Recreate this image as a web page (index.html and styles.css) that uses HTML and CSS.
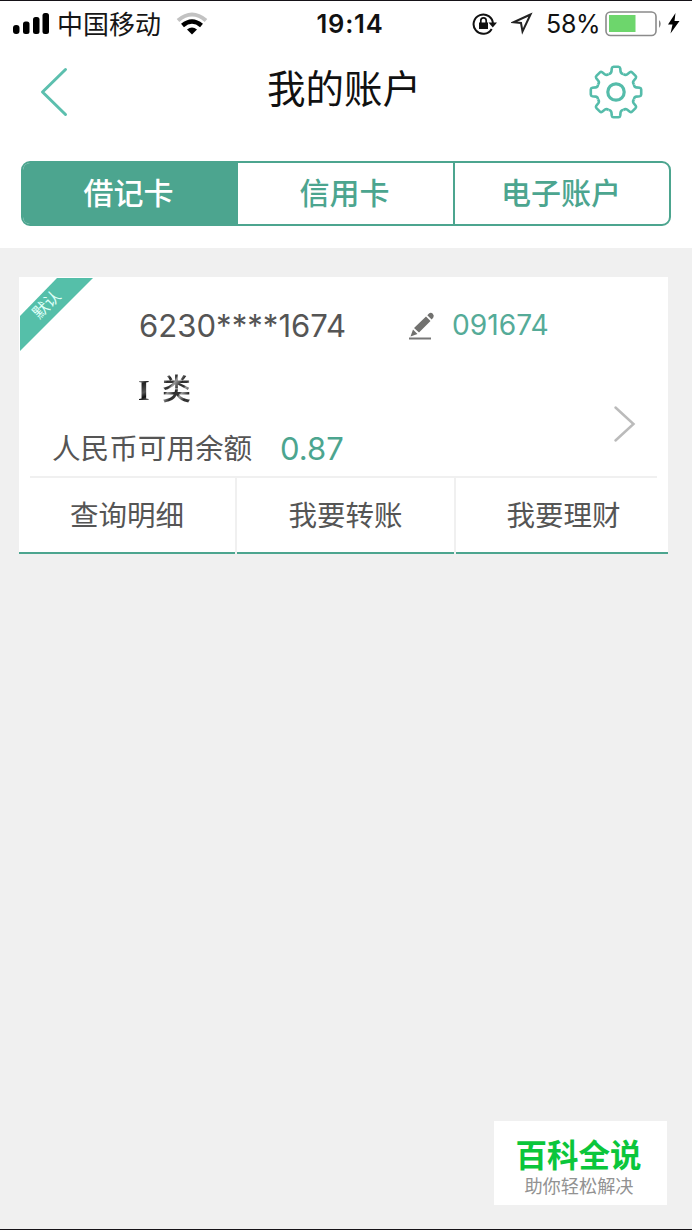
FILE: index.html
```html
<!DOCTYPE html>
<html lang="zh-CN">
<head>
<meta charset="utf-8">
<title>我的账户</title>
<link rel="stylesheet" href="styles.css">
</head>
<body>
<div class="screen">
  <header class="top">
    <div class="status">
      <div class="status-left">
        <svg class="signal" width="37" height="24" viewBox="0 0 37 24"><rect x="0" y="13" width="6.500" height="9" rx="3"/><rect x="10" y="9.500" width="6.500" height="12.500" rx="2.500"/><rect x="20" y="5" width="6.500" height="17" rx="2.500"/><rect x="29.500" y="1" width="6.500" height="21" rx="2.500"/></svg>
        <span class="carrier">中国移动</span>
        <svg class="wifi" width="32" height="24" viewBox="0 0 32 24" fill="none"><path d="M2 8.500Q16-3.500 30 8.500" stroke="#c2c2c2" stroke-width="4"/><path d="M6.500 13.500Q16 5.500 25.500 13.500" stroke="#000" stroke-width="4.500"/><path d="M11 17.500Q16 13.500 21 17.500L16 22.500Z" fill="#000"/></svg>
      </div>
      <span class="time">19:14</span>
      <div class="status-right">
        <svg class="lock" width="26" height="24" viewBox="0 0 26 24" fill="none" stroke="#111"><path d="M19.700 17A9.700 9.700 0 1 1 21 12" stroke-width="2"/><path d="M16.500 10.500H25L20.800 15.500Z" fill="#111" stroke="none"/><rect x="7" y="10.500" width="9" height="6.500" fill="#111" stroke="none"/><path d="M8.800 11V8.500a2.700 2.700 0 0 1 5.400 0V11" stroke-width="1.700"/></svg>
        <svg class="locate" width="23" height="23" viewBox="0 0 23 23"><path d="M19.500 2.500L2.500 10.300 10 11 11.500 19.500Z" fill="none" stroke="#222" stroke-width="2"/></svg>
        <span class="percent">58%</span>
        <svg class="battery" width="58" height="26" viewBox="0 0 58 26"><rect x="1" y="1" width="50" height="23.500" rx="4.500" fill="#fff" stroke="#8b8b8b" stroke-width="1.600"/><rect x="4" y="4" width="26.500" height="17" fill="#6dd66c"/><path d="M54 9q3.500 3.500 0 8Z" fill="#888"/></svg>
        <svg class="bolt" width="13" height="21" viewBox="0 0 13 21"><path d="M8.500 0L1 11.500H5.500L3.500 20.500 12.500 8H7.500Z"/></svg>
      </div>
    </div>
    <nav class="titlebar">
      <svg class="back" width="30" height="50" viewBox="0 0 30 50"><path d="M26.500 2.500L3.500 25 26.500 47.500"/></svg>
      <h1 class="title">我的账户</h1>
      <svg class="gear" width="56" height="56" viewBox="-28 -28 56 56"><defs><path id="tooth" d="M-7.460-18.010Q-5-18.200-4.600-20.200L-4.200-23.700Q-3.900-25.200-2.500-25.200H2.500Q3.900-25.200 4.200-23.700L4.600-20.200Q5-18.200 7.460-18.010"/></defs><use href="#tooth"/><use href="#tooth" transform="rotate(45)"/><use href="#tooth" transform="rotate(90)"/><use href="#tooth" transform="rotate(135)"/><use href="#tooth" transform="rotate(180)"/><use href="#tooth" transform="rotate(225)"/><use href="#tooth" transform="rotate(270)"/><use href="#tooth" transform="rotate(315)"/><circle r="8.200"/></svg>
    </nav>
    <div class="tabs"><div class="tab active">借记卡</div><div class="tab">信用卡</div><div class="tab">电子账户</div></div>
  </header>
  <main class="content">
    <section class="card">
      <svg class="ribbon" width="74" height="74" viewBox="0 0 74 74"><path d="M1 38L38 0H74L1 73Z" fill="#55bfa9"/><text class="ribbon-text" x="28" y="32" text-anchor="middle" transform="rotate(-45 28 27)">默认</text></svg>
      <div class="summary">
        <div class="details">
          <div class="number-row"><span class="number">6230****1674</span>
            <svg class="pencil" width="28" height="30" viewBox="0 0 28 30"><path d="M6 17L18 5.500 22.500 10 11 21.500Z M19.300 4.200L21 2.500Q23 1 24.800 2.800T25.200 6.800L23.600 8.600Z M5 18.500L9.500 23 2.500 25.500Z" fill="#71716f"/><path d="M1 27.500H23" stroke="#777" stroke-width="2"/></svg>
            <span class="alias">091674</span></div>
          <div class="kind"><span class="kind-level">I</span><span class="kind-name">类</span></div>
          <div class="balance-row"><span class="balance-label">人民币可用余额</span><span class="balance">0.87</span></div>
        </div>
        <svg class="chevron" width="24" height="38" viewBox="0 0 24 38"><path d="M2.500 2.500L20.500 19 2.500 35.500"/></svg>
      </div>
      <div class="actions"><div class="action">查询明细</div><div class="action">我要转账</div><div class="action">我要理财</div></div>
    </section>
  </main>
  <aside class="stamp"><div class="stamp-name">百科全说</div><div class="stamp-line">助你轻松解决</div></aside>
</div>
</body>
</html>
```
FILE: styles.css
```css
* { box-sizing: border-box; }
body { margin: 0; font-family: Inter, "Noto Sans CJK SC", sans-serif; background: #f0f0f0; }
svg { display: block; flex: none; }
.screen { position: relative; width: 692px; height: 1230px; background: #f0f0f0; border-top: 1px solid #151217; border-bottom: 1px solid #151217; overflow: hidden; }
.top { height: 247px; background: #fff; }
.status { height: 45px; display: grid; grid-template-columns: 250px 200px 1fr; align-items: center; }
.status-left, .status-right { display: flex; align-items: center; height: 45px; }
.status-left { padding-left: 13px; }
.carrier { margin-left: 7px; padding-bottom: 2px; font-size: 26px; color: #161616; white-space: nowrap; }
.wifi { margin-left: 15px; }
.time { text-align: center; font-size: 25.500px; font-weight: 600; color: #111; letter-spacing: .8px; }
.status-right { padding-left: 22px; }
.locate { margin-left: 13px; }
.percent { margin-left: 12px; font-size: 25px; color: #111; width: 55px; letter-spacing: -.3px; }
.battery { margin-left: 4px; }
.bolt { margin-left: 4px; }
.titlebar { height: 92px; display: grid; grid-template-columns: 250px 1fr 250px; align-items: center; }
.back { margin-left: 39px; fill: none; stroke: #5cbfae; stroke-width: 3; stroke-linecap: round; stroke-linejoin: round; }
.title { margin: 0 4px 6px 0; text-align: center; font-size: 38.500px; font-weight: 400; color: #111; line-height: 50px; }
.gear { margin-left: 146px; fill: none; stroke: #55bcaa; stroke-width: 2.600; }
.gear circle { stroke-width: 3.200; }
.tabs { margin: 23px 21px 0; width: 650px; height: 65px; display: grid; grid-template-columns: 213px 217px 1fr; border: 2px solid #4ca58f; border-radius: 9px; overflow: hidden; }
.tab { display: flex; align-items: center; justify-content: center; padding: 0 2px 5px 0; color: #4ca58f; font-size: 30px; font-weight: 500; border-left: 2px solid #4ca58f; }
.tab:first-child { border-left: 0; }
.tab.active { background: #4ca58f; color: #fff; }
.content { padding: 29px 24px 0 19px; }
.card { position: relative; height: 277px; background: #fff; }
.ribbon { position: absolute; left: 0; top: 1px; }
.ribbon-text { font-size: 16px; fill: #dffff8; }
.summary { height: 201px; margin: 0 11px; padding: 28px 20px 0 22px; border-bottom: 2px solid #f0f0f0; display: flex; justify-content: space-between; }
.number-row { display: flex; align-items: center; height: 42px; margin-left: 87px; color: #555; }
.number { width: 207px; font-size: 31.100px; white-space: nowrap; padding-bottom: 1px; }
.pencil { margin-left: 62px; }
.alias { margin-left: 16px; padding-bottom: 2px; color: #55ab98; font-size: 28.200px; }
.kind { height: 42px; margin: 22px 0 0 86px; display: flex; align-items: center; font-family: "Liberation Serif", "Noto Sans CJK SC", serif; font-size: 30px; font-weight: 700; line-height: 42px; }
.kind-level, .kind-name { color: transparent; background-clip: text; -webkit-background-clip: text; }
.kind-level { width: 24px; background-image: linear-gradient(155deg, #aaa 25%, #222 35%, #555 55%, #111 65%, #999 80%); background-size: 12px 42px; background-repeat: no-repeat; }
.kind-name { font-size: 29px; font-weight: 500; background-image: repeating-linear-gradient(125deg, #333 0 4px, #999 6px, #666 9px, #222 12px); }
.balance-row { display: flex; align-items: center; height: 44px; margin-top: 15px; }
.balance-label { width: 201px; padding-bottom: 3px; font-size: 28.600px; color: #555; white-space: nowrap; }
.balance { margin-left: 27px; color: #4ca58f; font-size: 31px; }
.chevron { margin-top: 100px; fill: none; stroke: #bbb; stroke-width: 2.500; stroke-linecap: round; }
.actions { display: grid; grid-template-columns: 216px 217px 212px; gap: 2px; height: 76px; background: #f0f0f0; }
.action { background: #fff; border-bottom: 2px solid #4ca58f; padding-bottom: 4px; display: flex; align-items: center; justify-content: center; font-size: 28.500px; color: #555; }
.action:last-child { padding-left: 3px; }
.stamp { position: absolute; left: 494px; top: 1120px; width: 173px; height: 84px; padding-top: 15px; background: #fff; text-align: center; white-space: nowrap; }
.stamp-name { height: 40px; line-height: 40px; padding-right: 4px; color: #0bc63b; font-size: 31.500px; font-weight: 700; }
.stamp-line { height: 22px; line-height: 20px; padding-right: 3px; color: #929292; font-size: 18.200px; }
```
